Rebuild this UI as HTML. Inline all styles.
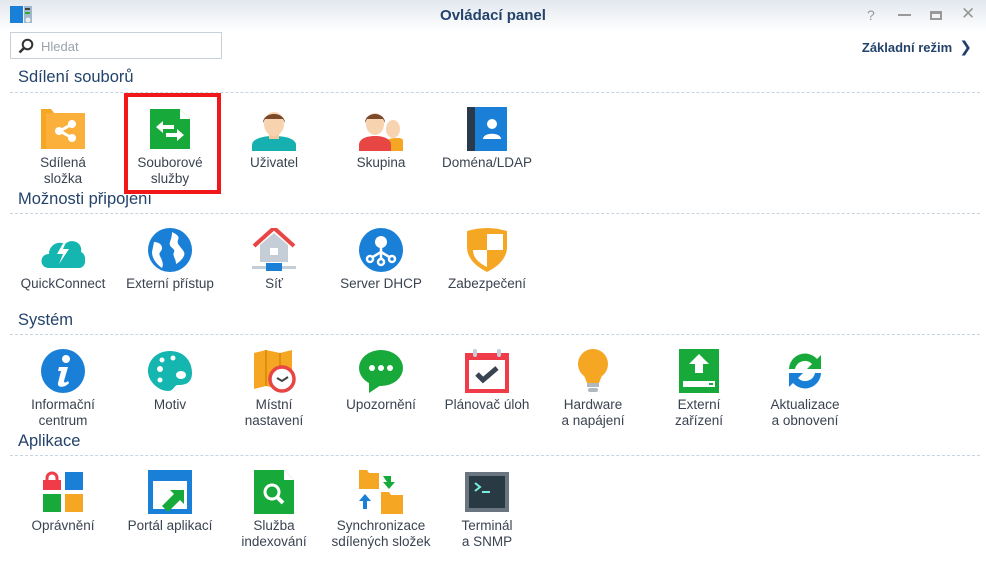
<!DOCTYPE html>
<html><head><meta charset="utf-8"><style>
*{margin:0;padding:0;box-sizing:border-box}
body{width:986px;height:564px;background:#fff;font-family:"Liberation Sans","DejaVu Sans",sans-serif;position:relative;overflow:hidden;color:#3a4350}
.tb{position:absolute;left:0;top:0;width:986px;height:32px;background:linear-gradient(#e3e8ee,#fff)}
.title{position:absolute;left:0;width:986px;top:7px;text-align:center;font-weight:bold;font-size:15px;color:#23436b}
.ctl{position:absolute;top:7px;color:#999;font-size:14px}
.search{position:absolute;left:10px;top:32px;width:212px;height:27px;border:1px solid #c8d0d9;background:#fff}
.search span{position:absolute;left:30px;top:6px;font-size:13px;color:#9aa3ad}
.basic{position:absolute;right:14px;top:38px;font-size:13px;font-weight:bold;color:#23436b}
h2{position:absolute;left:18px;font-size:16.5px;font-weight:normal;color:#23436b}
.line{position:absolute;left:10px;width:970px;border-top:1px dashed #c8d4e0}
.it{position:absolute;width:106px;text-align:center;font-size:13.5px;line-height:16px;color:#3a4350}
.it svg{display:block;margin:0 auto 4px;width:44px;height:44px}
.red{position:absolute;left:124px;top:93px;width:97px;height:101px;border:4px solid #f01818}
</style></head><body>
<div class="tb"></div>
<svg style="position:absolute;left:10px;top:5px" width="24" height="20"><rect x="0" y="1" width="13" height="17" fill="#1a7fd6"/><rect x="14" y="1" width="8" height="17" fill="#9fb8cc"/><rect x="15" y="3" width="5" height="2" fill="#444"/><rect x="15" y="7" width="5" height="2" fill="#3a3"/><circle cx="18" cy="15" r="2.5" fill="#eee"/></svg>
<div class="title">Ovládací panel</div>
<div class="ctl" style="left:867px">?</div>
<div class="ctl" style="left:898px;top:14px;width:13px;height:2px;background:#999"></div>
<div class="ctl" style="left:930px;top:11px;width:12px;height:9px;border:2px solid #999;border-top-width:3px"></div>
<div class="ctl" style="left:961px;top:4px;font-size:17px">✕</div>
<div class="search"><svg style="position:absolute;left:7px;top:5px" width="16" height="16"><circle cx="9.5" cy="6.5" r="4.8" fill="none" stroke="#333" stroke-width="2"/><line x1="6" y1="10" x2="1.5" y2="14.5" stroke="#333" stroke-width="2.5"/></svg><span>Hledat</span></div>
<div class="basic">Základní režim &nbsp;<span style="font-weight:normal;font-size:15px">❯</span></div>

<h2 style="top:68px">Sdílení souborů</h2><div class="line" style="top:92px"></div>
<h2 style="top:190px">Možnosti připojení</h2><div class="line" style="top:213px"></div>
<h2 style="top:311px">Systém</h2><div class="line" style="top:334px"></div>
<h2 style="top:432px">Aplikace</h2><div class="line" style="top:455px"></div>

<!-- row 1 -->
<div class="it" style="left:10px;top:107px"><svg viewBox="0 0 44 44"><path d="M0 2h10l3 4h31v36H0z" fill="#f5a623"/><rect x="5" y="6" width="39" height="36" fill="#fbb03b"/><g fill="#fff" stroke="#fff" stroke-width="3"><line x1="19" y1="24" x2="31" y2="17"/><line x1="19" y1="24" x2="31" y2="31"/></g><g fill="#fff"><circle cx="18" cy="24" r="4"/><circle cx="31" cy="17" r="4"/><circle cx="31" cy="31" r="4"/></g></svg>Sdílená<br>složka</div>
<div class="it" style="left:117px;top:107px"><svg viewBox="0 0 44 44"><path d="M2 2h30l10 10v30H2z" fill="#17a93a"/><path d="M32 2v10h10z" fill="#fff"/><path d="M8 20l7-6v4h11v4H15v4z M36 28l-7-6v4H18v4h11v4z" fill="#fff"/></svg>Souborové<br>služby</div>
<div class="red"></div>
<div class="it" style="left:221px;top:107px"><svg viewBox="0 0 44 44"><path d="M0 44v-6c0-6 10-9 22-9s22 3 22 9v6z" fill="#16b0b0"/><rect x="17" y="24" width="10" height="8" fill="#f5c8a0"/><ellipse cx="22" cy="17" rx="10" ry="12" fill="#f8d3b0"/><path d="M11 16c0-12 22-12 22 0l-2-4c-4 0-14 0-18 0z" fill="#7a4a2a"/></svg>Uživatel</div>
<div class="it" style="left:328px;top:107px"><svg viewBox="0 0 44 44"><path d="M22 44v-5c0-5 8-8 16-8s6 3 6 8v5z" fill="#f5a623"/><ellipse cx="34" cy="22" rx="7" ry="9" fill="#f8d3b0"/><path d="M0 44v-6c0-6 7-9 16-9s16 3 16 9v6z" fill="#e84545"/><ellipse cx="16" cy="17" rx="9" ry="11" fill="#f8d3b0"/><path d="M6 16c0-12 20-12 20 0l-2-4H8z" fill="#7a4a2a"/></svg>Skupina</div>
<div class="it" style="left:434px;top:107px"><svg viewBox="0 0 44 44"><rect x="2" y="0" width="40" height="44" fill="#1a7fd6"/><rect x="2" y="0" width="8" height="44" fill="#2a3a4a"/><circle cx="27" cy="17" r="5" fill="#fff"/><path d="M18 32c0-7 18-7 18 0z" fill="#fff"/></svg>Doména/LDAP</div>

<!-- row 2 -->
<div class="it" style="left:10px;top:228px"><svg viewBox="0 0 44 44"><path d="M8 40c-10 0-10-14 0-14 0-8 8-14 16-10 6-6 18-2 16 8 6 2 6 16-2 16z" fill="#15b5b0"/><path d="M24 12l-8 14h6l-4 10 10-15h-6l4-9z" fill="#fff"/></svg>QuickConnect</div>
<div class="it" style="left:117px;top:228px"><svg viewBox="0 0 44 44"><circle cx="22" cy="22" r="22" fill="#1a7fd6"/><path d="M6 14c4 0 8 2 8 6s-4 4-2 8 4 8 2 12c-6-4-10-10-10-16zM24 4c4 2 8 4 6 8s4 8 6 12-4 10-8 12c0-6-4-8-2-12s-6-4-4-10 2-8 2-10z" fill="#fff"/></svg>Externí přístup</div>
<div class="it" style="left:221px;top:228px"><svg viewBox="0 0 44 44"><path d="M2 18L22 0l20 18" fill="none" stroke="#e84545" stroke-width="4"/><path d="M8 17L22 5l14 12v17H8z" fill="#c5ced7"/><rect x="18" y="20" width="8" height="7" fill="#fff"/><rect x="0" y="38" width="44" height="3" fill="#c5ced7"/><rect x="14" y="35" width="16" height="8" fill="#1a7fd6"/></svg>Síť</div>
<div class="it" style="left:328px;top:228px"><svg viewBox="0 0 44 44"><circle cx="22" cy="22" r="22" fill="#1a7fd6"/><circle cx="22" cy="14" r="6" fill="#fff"/><path d="M22 18v14M22 24l-10 6M22 24l10 6" stroke="#fff" stroke-width="2.5" fill="none"/><g fill="#1a7fd6" stroke="#fff" stroke-width="2.5"><circle cx="11" cy="31" r="3"/><circle cx="22" cy="34" r="3"/><circle cx="33" cy="31" r="3"/></g></svg>Server DHCP</div>
<div class="it" style="left:434px;top:228px"><svg viewBox="0 0 44 44"><path d="M2 3c14-4 26-4 40 0v16c0 12-10 20-20 25C12 39 2 31 2 19z" fill="#f5a623"/><path d="M22 6h16v16H22zM8 22h14v17C14 35 8 30 8 22z" fill="#fff"/></svg>Zabezpečení</div>

<!-- row 3 -->
<div class="it" style="left:10px;top:349px"><svg viewBox="0 0 44 44"><circle cx="22" cy="22" r="22" fill="#1a7fd6"/><circle cx="25" cy="10" r="4" fill="#fff"/><path d="M18 18h9l-4 14c0 2 2 2 4 0l1 2c-4 5-12 5-11 0l3-12h-3z" fill="#fff"/></svg>Informační<br>centrum</div>
<div class="it" style="left:117px;top:349px"><svg viewBox="0 0 44 44"><path d="M22 2C8 2 0 12 0 22s10 20 20 20c6 0 6-6 10-6s14 0 14-12S36 2 22 2z" fill="#15b5b0"/><g fill="#fff"><circle cx="12" cy="20" r="3"/><circle cx="14" cy="11" r="2.5"/><circle cx="25" cy="9" r="2.5"/><ellipse cx="33" cy="26" rx="5" ry="4"/><circle cx="12" cy="31" r="2.5"/></g></svg>Motiv</div>
<div class="it" style="left:221px;top:349px"><svg viewBox="0 0 44 44"><path d="M2 4l12-3 14 3 12-3v36l-12 3-14-3-12 3z" fill="#f5a623"/><path d="M14 1v36M28 4v36" stroke="#e08e10" stroke-width="2"/><circle cx="30" cy="30" r="12" fill="#fff" stroke="#e84545" stroke-width="3.5"/><path d="M25 29l5 3 6-4" stroke="#444" stroke-width="2" fill="none"/></svg>Místní<br>nastavení</div>
<div class="it" style="left:328px;top:349px"><svg viewBox="0 0 44 44"><ellipse cx="22" cy="19" rx="22" ry="18" fill="#17a93a"/><path d="M10 32l0 12 12-8z" fill="#17a93a"/><g fill="#fff"><circle cx="13" cy="19" r="3"/><circle cx="22" cy="19" r="3"/><circle cx="31" cy="19" r="3"/></g></svg>Upozornění</div>
<div class="it" style="left:434px;top:349px"><svg viewBox="0 0 44 44"><rect x="0" y="4" width="44" height="40" fill="#f03c48"/><rect x="4" y="11" width="36" height="29" fill="#fff"/><rect x="8" y="0" width="4" height="8" rx="2" fill="#c5ced7"/><rect x="32" y="0" width="4" height="8" rx="2" fill="#c5ced7"/><path d="M12 25l6 6 14-12" stroke="#3a4350" stroke-width="5" fill="none"/></svg>Plánovač úloh</div>
<div class="it" style="left:540px;top:349px"><svg viewBox="0 0 44 44"><circle cx="22" cy="15" r="15" fill="#f5a623"/><path d="M12 24h20l-4 10H16z" fill="#f5a623"/><rect x="16" y="34" width="12" height="4" fill="#b0b8c0"/><rect x="17" y="39" width="10" height="4" rx="2" fill="#b0b8c0"/></svg>Hardware<br>a napájení</div>
<div class="it" style="left:646px;top:349px"><svg viewBox="0 0 44 44"><rect x="2" y="0" width="40" height="44" fill="#17a93a"/><path d="M22 5l10 10h-6v9h-8v-9h-6z" fill="#fff"/><rect x="6" y="32" width="32" height="6" fill="#fff"/><rect x="32" y="34" width="4" height="2" fill="#17a93a"/></svg>Externí<br>zařízení</div>
<div class="it" style="left:752px;top:349px"><svg viewBox="0 0 44 44"><path d="M6 20A16 16 0 0 1 34 10l4-4v14H24l5-5A10 10 0 0 0 12 20z" fill="#17a93a"/><path d="M38 24A16 16 0 0 1 10 34l-4 4V24h14l-5 5a10 10 0 0 0 17-5z" fill="#1a7fd6"/></svg>Aktualizace<br>a obnovení</div>

<!-- row 4 -->
<div class="it" style="left:10px;top:470px"><svg viewBox="0 0 44 44"><rect x="24" y="2" width="18" height="18" fill="#1a7fd6"/><rect x="2" y="24" width="18" height="18" fill="#17a93a"/><rect x="24" y="24" width="18" height="18" fill="#f5a623"/><path d="M6 10V8a5 5 0 0 1 10 0v2" stroke="#f03c48" stroke-width="3" fill="none"/><rect x="2" y="10" width="18" height="10" fill="#f03c48"/></svg>Oprávnění</div>
<div class="it" style="left:117px;top:470px"><svg viewBox="0 0 44 44"><rect x="0" y="0" width="44" height="44" fill="#1a7fd6"/><rect x="5" y="5" width="34" height="34" fill="#fff"/><rect x="5" y="5" width="34" height="6" fill="#1a7fd6"/><path d="M14 36l12-12-4-4h14v14l-4-4-12 12z" fill="#17a93a"/></svg>Portál aplikací</div>
<div class="it" style="left:221px;top:470px"><svg viewBox="0 0 44 44"><path d="M2 0h30l10 10v34H2z" fill="#17a93a"/><path d="M32 0v10h10z" fill="#fff"/><circle cx="20" cy="22" r="7" fill="none" stroke="#fff" stroke-width="3"/><path d="M25 27l6 6" stroke="#fff" stroke-width="4"/></svg>Služba<br>indexování</div>
<div class="it" style="left:328px;top:470px"><svg viewBox="0 0 44 44"><path d="M0 0h8l2 3h10v16H0z" fill="#f5a623"/><path d="M22 22h8l2 3h12v19H22z" fill="#f5a623"/><path d="M24 6h8v6h4l-6 7-6-7h4z" fill="#17a93a"/><path d="M6 24l6 7h-4v8h-4v-8H0z" fill="#1a7fd6"/></svg>Synchronizace<br>sdílených složek</div>
<div class="it" style="left:434px;top:470px"><svg viewBox="0 0 44 44"><rect x="0" y="2" width="44" height="40" fill="#6b7580"/><rect x="4" y="6" width="36" height="32" fill="#2a3a44"/><path d="M10 13l5 4-5 4" stroke="#7ed" stroke-width="2" fill="none"/><rect x="17" y="21" width="8" height="2" fill="#7ed"/></svg>Terminál<br>a SNMP</div>
</body></html>
